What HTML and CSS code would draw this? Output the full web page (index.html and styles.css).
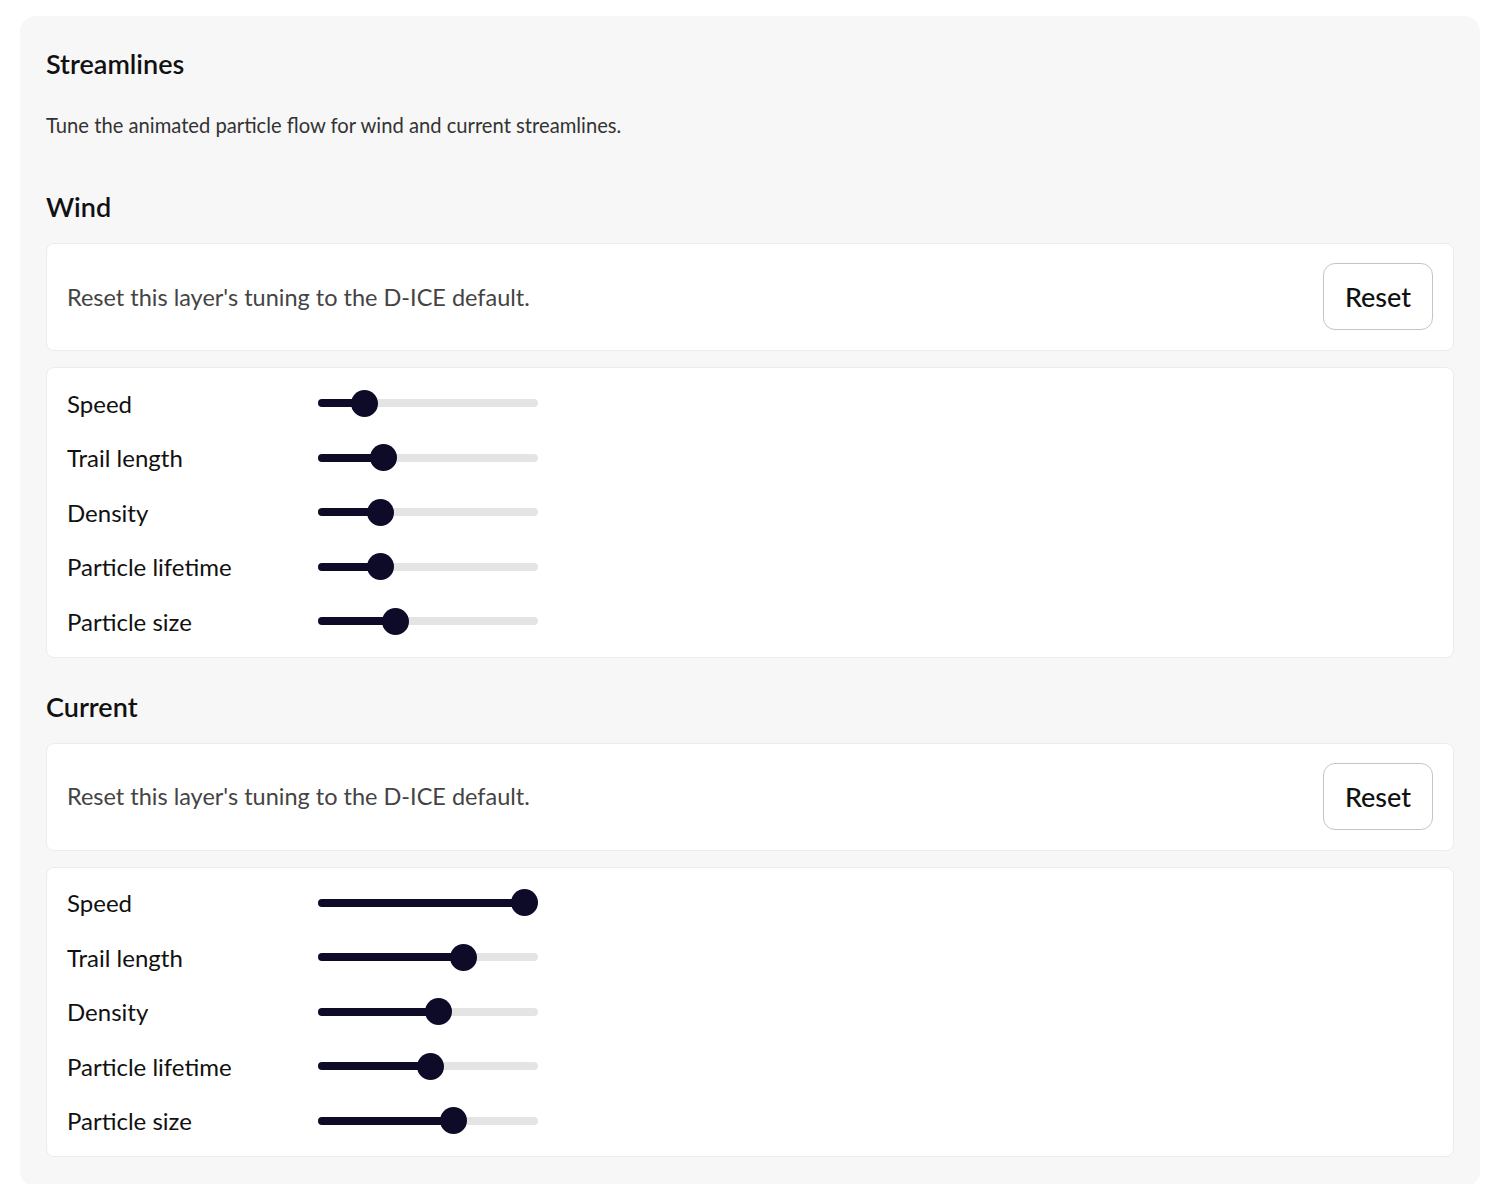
FILE: index.html
```html
<!DOCTYPE html>
<html lang="en">
<head>
  <meta charset="UTF-8">
  <meta name="viewport" content="width=device-width, initial-scale=1.0">
  <title>Streamlines</title>
  <link rel="stylesheet" href="styles.css">
</head>
<body>
  <div class="panel">
    <h1>Streamlines</h1>
    <p class="intro">Tune the animated particle flow for wind and current streamlines.</p>

    <section class="layer">
      <h2>Wind</h2>
      <div class="card reset-card">
        <span class="reset-text">Reset this layer's tuning to the D-ICE default.</span>
        <button type="button">Reset</button>
      </div>
      <div class="card sliders">
        <div class="row">
          <span class="label">Speed</span>
          <div class="track"><div class="fill" style="width: 46px"></div><div class="thumb" style="left: 32.5px"></div></div>
        </div>
        <div class="row">
          <span class="label">Trail length</span>
          <div class="track"><div class="fill" style="width: 65px"></div><div class="thumb" style="left: 51.5px"></div></div>
        </div>
        <div class="row">
          <span class="label">Density</span>
          <div class="track"><div class="fill" style="width: 62px"></div><div class="thumb" style="left: 48.5px"></div></div>
        </div>
        <div class="row">
          <span class="label">Particle lifetime</span>
          <div class="track"><div class="fill" style="width: 62px"></div><div class="thumb" style="left: 48.5px"></div></div>
        </div>
        <div class="row">
          <span class="label">Particle size</span>
          <div class="track"><div class="fill" style="width: 77px"></div><div class="thumb" style="left: 63.5px"></div></div>
        </div>
      </div>
    </section>

    <section class="layer">
      <h2>Current</h2>
      <div class="card reset-card">
        <span class="reset-text">Reset this layer's tuning to the D-ICE default.</span>
        <button type="button">Reset</button>
      </div>
      <div class="card sliders">
        <div class="row">
          <span class="label">Speed</span>
          <div class="track"><div class="fill" style="width: 206px"></div><div class="thumb" style="left: 192.5px"></div></div>
        </div>
        <div class="row">
          <span class="label">Trail length</span>
          <div class="track"><div class="fill" style="width: 145px"></div><div class="thumb" style="left: 131.5px"></div></div>
        </div>
        <div class="row">
          <span class="label">Density</span>
          <div class="track"><div class="fill" style="width: 120px"></div><div class="thumb" style="left: 106.5px"></div></div>
        </div>
        <div class="row">
          <span class="label">Particle lifetime</span>
          <div class="track"><div class="fill" style="width: 112px"></div><div class="thumb" style="left: 98.5px"></div></div>
        </div>
        <div class="row">
          <span class="label">Particle size</span>
          <div class="track"><div class="fill" style="width: 135px"></div><div class="thumb" style="left: 121.5px"></div></div>
        </div>
      </div>
    </section>
  </div>
</body>
</html>
```

FILE: styles.css
```css
body {
  font-family: Lato, "Open Sans", sans-serif;
  margin: 0;
  padding: 16px 20px 0;
  background-color: #ffffff;
  color: #111;
}

.panel {
  background: #f7f7f7;
  border-radius: 16px;
  padding: 32px 26px 30px;
}

h1 {
  font-size: 27px;
  font-weight: 600;
  line-height: 32px;
  margin: 0 0 33px;
}

.intro {
  font-size: 20.2px;
  line-height: 24px;
  color: #333;
  margin: 0 0 53px;
}

.layer h2 {
  font-size: 27px;
  font-weight: 600;
  line-height: 34px;
  margin: 0 0 19px;
}

.layer + .layer {
  margin-top: 32px;
}

.card {
  background: #ffffff;
  border: 1px solid #ececec;
  border-radius: 8px;
}

.reset-card {
  display: flex;
  align-items: center;
  justify-content: space-between;
  padding: 19px 20px 20px 20px;
  margin-bottom: 16px;
}

.reset-text {
  font-size: 23.5px;
  color: #444;
}

button {
  font-family: inherit;
  font-size: 27px;
  font-weight: 500;
  color: #111;
  background: #ffffff;
  border: 1px solid #c4c4c4;
  border-radius: 12px;
  height: 67px;
  padding: 0 21px;
  cursor: pointer;
}

.sliders {
  padding: 8px 20px;
}

.row {
  display: flex;
  align-items: center;
  height: 54.5px;
}

.label {
  width: 251px;
  font-size: 24px;
  color: #111;
}

.track {
  position: relative;
  width: 220px;
  height: 8px;
  border-radius: 4px;
  background: #e4e4e4;
}

.fill {
  height: 100%;
  border-radius: 4px;
  background: #0d0b28;
}

.thumb {
  position: absolute;
  top: -9.5px;
  width: 27px;
  height: 27px;
  border-radius: 50%;
  background: #0d0b28;
}
```
